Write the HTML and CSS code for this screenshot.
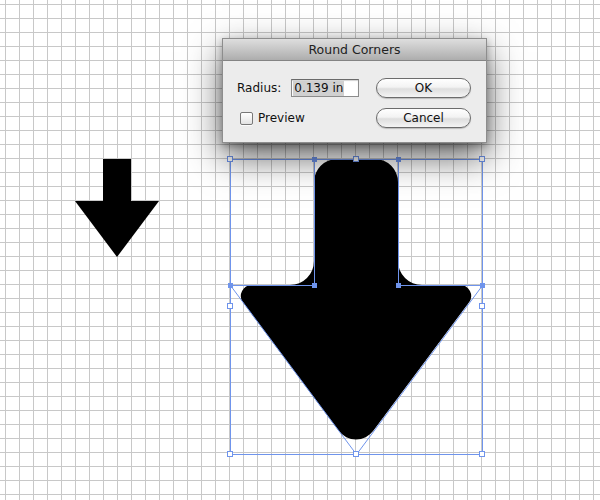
FILE: index.html
```html
<!DOCTYPE html>
<html lang="en">
<head>
<meta charset="utf-8">
<title>Round Corners</title>
<link rel="stylesheet" href="styles.css">
</head>
<body>
<svg class="canvas" width="600" height="500" viewBox="0 0 600 500" xmlns="http://www.w3.org/2000/svg">
  <!-- small original arrow -->
  <polygon points="103,159 131,159 131,201 159,201 117,257 75,201 103,201" fill="#000"/>

  <!-- rounded arrow -->
  <path fill="#000" d="M337 159 H375 A23 23 0 0 1 398 182 V261 A24 24 0 0 0 422 285 H460.1 A11 11 0 0 1 468.9 302.6 L373.3 430.8 A21.6 21.6 0 0 1 338.7 430.8 L243.1 302.6 A11 11 0 0 1 251.9 285 H290 A24 24 0 0 0 314 261 V182 A23 23 0 0 1 337 159 Z"/>

  <!-- original path outline and bounding box -->
  <g fill="none" stroke="#6f94ec" stroke-width="1">
    <rect x="230.5" y="159.5" width="252" height="295"/>
    <polyline points="230.5,285.5 314.5,285.5 314.5,159.5"/>
    <polyline points="398.5,159.5 398.5,285.5 482.5,285.5"/>
    <line x1="230.5" y1="285.5" x2="356.5" y2="454.5"/>
    <line x1="482.5" y1="285.5" x2="356.5" y2="454.5"/>
  </g>

  <!-- anchor points -->
  <g fill="#6f94ec">
    <rect x="312" y="157" width="5" height="5"/>
    <rect x="396" y="157" width="5" height="5"/>
    <rect x="312" y="283" width="5" height="5"/>
    <rect x="396" y="283" width="5" height="5"/>
    <rect x="228" y="283" width="5" height="5"/>
    <rect x="480" y="283" width="5" height="5"/>
  </g>

  <!-- bounding box handles -->
  <g fill="#fff" stroke="#6f94ec" stroke-width="1">
    <rect x="227.5" y="156.5" width="5" height="5"/>
    <rect x="353.5" y="156.5" width="5" height="5"/>
    <rect x="479.5" y="156.5" width="5" height="5"/>
    <rect x="227.5" y="303.5" width="5" height="5"/>
    <rect x="479.5" y="303.5" width="5" height="5"/>
    <rect x="227.5" y="451.5" width="5" height="5"/>
    <rect x="353.5" y="451.5" width="5" height="5"/>
    <rect x="479.5" y="451.5" width="5" height="5"/>
  </g>
</svg>

<div class="dialog">
  <div class="titlebar">Round Corners</div>
  <div class="dialog-body">
    <div class="fields">
      <div class="row">
        <label class="label" for="radius">Radius:</label>
        <div class="field" id="radius"><span class="selected">0.139 in</span></div>
      </div>
      <div class="row">
        <span class="checkbox"></span>
        <span class="label">Preview</span>
      </div>
    </div>
    <div class="buttons">
      <div class="button">OK</div>
      <div class="button">Cancel</div>
    </div>
  </div>
</div>
</body>
</html>
```
FILE: styles.css
```css
html, body {
  margin: 0;
  padding: 0;
}

body {
  width: 600px;
  height: 500px;
  overflow: hidden;
  position: relative;
  background-color: #ffffff;
  background-image:
    linear-gradient(to right, #c8c8c8 0, #c8c8c8 1px, transparent 1px),
    linear-gradient(to bottom, #c8c8c8 0, #c8c8c8 1px, transparent 1px);
  background-size: 14px 14px;
  background-position: 5px 4px;
  font-family: "DejaVu Sans", Verdana, sans-serif;
  color: #111;
}

.canvas {
  position: absolute;
  left: 0;
  top: 0;
  display: block;
}

.dialog {
  position: absolute;
  left: 222px;
  top: 38px;
  width: 265px;
  background: #ececec;
  border: 1px solid rgba(0, 0, 0, 0.4);
  box-sizing: border-box;
  box-shadow: 0 14px 34px rgba(0, 0, 0, 0.62), 0 3px 8px rgba(0, 0, 0, 0.3);
}

.titlebar {
  height: 22px;
  line-height: 21px;
  text-align: center;
  font-size: 12.5px;
  color: #222;
  background: linear-gradient(to bottom, #dedede 0%, #c6c6c6 50%, #adadad 100%);
  border-bottom: 1px solid #848484;
  box-sizing: border-box;
}

.dialog-body {
  display: flex;
  justify-content: space-between;
  padding: 17px 15px 14px 14px;
}

.fields {
  display: flex;
  flex-direction: column;
  gap: 10px;
}

.row {
  height: 20px;
  display: flex;
  align-items: center;
}

.label {
  font-size: 12px;
  color: #111;
}

.field {
  margin-left: 10px;
  width: 68px;
  height: 18px;
  box-sizing: border-box;
  background: #fff;
  border: 1px solid #8c8c8c;
  border-top-color: #6a6a6a;
  box-shadow: inset 0 1px 1px rgba(0, 0, 0, 0.18);
  padding: 1px 0 0 1px;
  font-size: 12px;
  line-height: 15px;
}

.selected {
  display: inline-block;
  background: #d0d0d0;
  padding: 0 1px 0 1px;
  height: 15px;
}

.checkbox {
  width: 13px;
  height: 13px;
  margin-left: 3px;
  margin-right: 5px;
  box-sizing: border-box;
  border: 1px solid #787878;
  border-radius: 2px;
  background: linear-gradient(to bottom, #ffffff 0%, #f2f2f2 50%, #e2e2e2 100%);
  box-shadow: 0 1px 0 rgba(255, 255, 255, 0.8);
}

.buttons {
  display: flex;
  flex-direction: column;
  gap: 10px;
}

.button {
  width: 95px;
  height: 20px;
  box-sizing: border-box;
  border: 1px solid #6c6c6c;
  border-radius: 10px;
  background: linear-gradient(to bottom, #ffffff 0%, #f3f3f3 45%, #dedede 55%, #f4f4f4 100%);
  box-shadow: 0 1px 1px rgba(0, 0, 0, 0.2);
  text-align: center;
  font-size: 12px;
  line-height: 18px;
  color: #111;
}
```
